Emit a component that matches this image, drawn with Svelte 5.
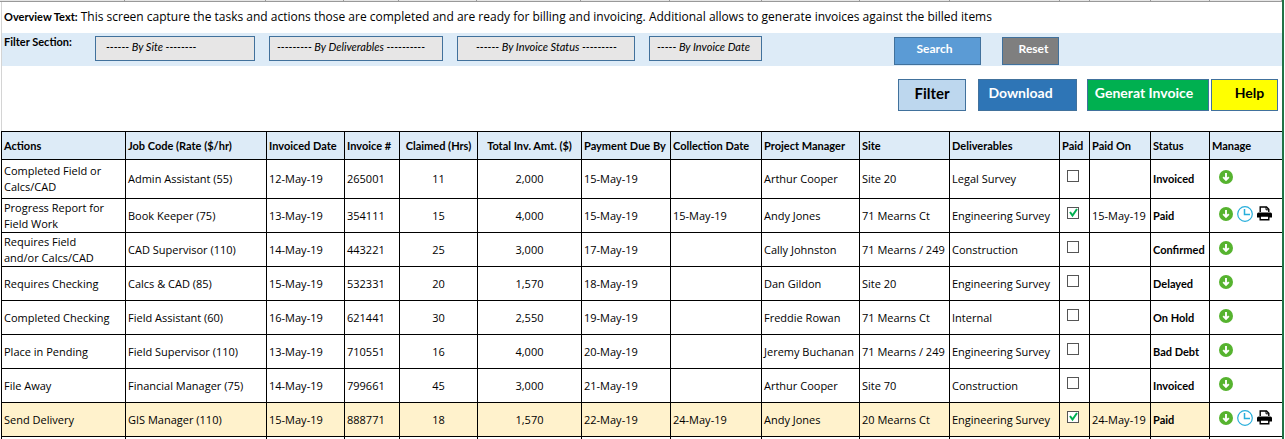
<script>
  const columns = [
    { title: 'Actions', width: 124 },
    { title: 'Job Code (Rate ($/hr)', width: 141 },
    { title: 'Invoiced Date', width: 78 },
    { title: 'Invoice #', width: 55 },
    { title: 'Claimed (Hrs)', width: 78, center: true },
    { title: 'Total Inv. Amt. ($)', width: 104, center: true },
    { title: 'Payment Due By', width: 89 },
    { title: 'Collection Date', width: 91 },
    { title: 'Project Manager', width: 98 },
    { title: 'Site', width: 90 },
    { title: 'Deliverables', width: 110 },
    { title: 'Paid', width: 30 },
    { title: 'Paid On', width: 61 },
    { title: 'Status', width: 59 },
    { title: 'Manage', width: 72 }
  ];
  const total = columns.reduce((sum, c) => sum + c.width, 0);
  const share = (c) => `width: ${(c.width / total) * 100}%`;

  const rows = [
    ['Completed Field or Calcs/CAD', 'Admin Assistant (55)', '12-May-19', '265001', '11', '2,000', '15-May-19', '', 'Arthur Cooper', 'Site 20', 'Legal Survey', '', 'Invoiced'],
    ['Progress Report for Field Work', 'Book Keeper (75)', '13-May-19', '354111', '15', '4,000', '15-May-19', '15-May-19', 'Andy Jones', '71 Mearns Ct', 'Engineering Survey', '15-May-19', 'Paid'],
    ['Requires Field and/or Calcs/CAD', 'CAD Supervisor (110)', '14-May-19', '443221', '25', '3,000', '17-May-19', '', 'Cally Johnston', '71 Mearns / 249', 'Construction', '', 'Confirmed'],
    ['Requires Checking', 'Calcs & CAD (85)', '15-May-19', '532331', '20', '1,570', '18-May-19', '', 'Dan Gildon', 'Site 20', 'Engineering Survey', '', 'Delayed'],
    ['Completed Checking', 'Field Assistant (60)', '16-May-19', '621441', '30', '2,550', '19-May-19', '', 'Freddie Rowan', '71 Mearns Ct', 'Internal', '', 'On Hold'],
    ['Place in Pending', 'Field Supervisor (110)', '13-May-19', '710551', '16', '4,000', '20-May-19', '', 'Jeremy Buchanan', '71 Mearns / 249', 'Engineering Survey', '', 'Bad Debt'],
    ['File Away', 'Financial Manager (75)', '14-May-19', '799661', '45', '3,000', '21-May-19', '', 'Arthur Cooper', 'Site 70', 'Construction', '', 'Invoiced'],
    ['Send Delivery', 'GIS Manager (110)', '15-May-19', '888771', '18', '1,570', '22-May-19', '24-May-19', 'Andy Jones', '20 Mearns Ct', 'Engineering Survey', '24-May-19', 'Paid']
  ];
</script>

<main>
  <div class="strip">
    {#each columns as c}<span style={share(c)}></span>{/each}
  </div>

  <section class="top">
    <p class="overview"><b>Overview Text:</b> This screen capture the tasks and actions those are completed and are ready for billing and invoicing. Additional allows to generate invoices against the billed items</p>

    <form class="filters" onsubmit={(e) => e.preventDefault()}>
      <span class="caption">Filter Section:</span>
      <select class="site" aria-label="Site"><option>------ By Site --------</option></select>
      <select class="deliverables" aria-label="Deliverables"><option>--------- By Deliverables ----------</option></select>
      <select class="status" aria-label="Invoice status"><option>------ By Invoice Status ---------</option></select>
      <select class="date" aria-label="Invoice date"><option>----- By Invoice Date</option></select>
      <div class="submit">
        <button class="search">Search</button>
        <button class="reset" type="reset">Reset</button>
      </div>
    </form>

    <div class="tools">
      <button class="filter">Filter</button>
      <button class="download">Download</button>
      <button class="generate">Generat Invoice</button>
      <button class="help">Help</button>
    </div>
  </section>

  <table>
    <colgroup>
      {#each columns as c}<col style={share(c)} />{/each}
    </colgroup>
    <thead>
      <tr>
        {#each columns as c}<th class:center={c.center}>{c.title}</th>{/each}
      </tr>
    </thead>
    <tbody>
      {#each rows as row, i}
        {@const paid = row[12] === 'Paid'}
        <tr class:tall={i === 0} class:selected={i === rows.length - 1}>
          {#each row.slice(0, 11) as text, n}
            <td class:wrap={n === 0} class:center={n === 4 || n === 5}>{text}</td>
          {/each}
          <td class="tick"><input type="checkbox" checked={paid} aria-label="Paid" /></td>
          <td>{row[11]}</td>
          <td class="state">{row[12]}</td>
          <td class="manage">
            <div class="icons">
              <button aria-label="Download">
                <svg width="14" height="14" viewBox="0 0 14 14">
                  <circle cx="7" cy="7" r="7" fill="#56b32f" />
                  <path d="M7 3v6.5M4.2 7.2 7 10l2.8-2.8" fill="none" stroke="#fff" stroke-width="1.9" />
                </svg>
              </button>
              {#if paid}
                <button aria-label="History">
                  <svg width="16" height="16" viewBox="0 0 16 16" fill="none" stroke="#27aedb">
                    <circle cx="8" cy="8" r="7.3" stroke-width="1.2" />
                    <path d="M7.5 3v5.5H13" stroke-width="1.5" />
                  </svg>
                </button>
                <button aria-label="Print">
                  <svg width="15" height="15" viewBox="0 0 15 15">
                    <path d="M3.2 6V1h6.3l2.3 2.3V6" fill="#fff" stroke="#000" stroke-width="1.4" />
                    <path d="M9 1v2.8h2.8" fill="none" stroke="#000" />
                    <path d="M1.5 6.5h12Q15 6.5 15 8v3.5H0V8q0-1.5 1.5-1.5z" />
                    <path d="M3.2 10h8.6v3.8H3.2z" fill="#fff" stroke="#000" stroke-width="1.4" />
                  </svg>
                </button>
              {/if}
            </div>
          </td>
        </tr>
      {/each}
      <tr class="next">{#each columns as c}<td></td>{/each}</tr>
    </tbody>
  </table>
</main>

<style>
  :global(body) { background: #fff; }
  main {
    margin-right: 1px;
    border-right: 2px solid #217346;
    font: 11px/16px "Open Sans", sans-serif;
    color: #000;
  }
  button, select { font: inherit; margin: 0; border-radius: 0; }
  b, .caption, th, .state, button, select { font-family: Lato, sans-serif; }
  .strip { display: flex; height: 1px; padding-left: 1px; background: #e6e6e6; border-bottom: 1px solid #999; }
  .strip span { box-sizing: border-box; border-right: 1px solid #999; }
  .top { margin-left: 1px; border-left: 1px solid #d4d4d4; }
  .overview { margin: 0; padding: 7px 2px 8px; font-size: 12px; white-space: nowrap; }
  .overview b { font-size: 11px; }
  .filters { display: flex; align-items: flex-start; height: 33px; padding-left: 2px; background: #ddebf7; }
  .caption { width: 91px; padding-top: 1px; font-weight: bold; }
  select {
    appearance: none;
    box-sizing: border-box;
    height: 25px;
    margin-top: 3px;
    margin-right: 14px;
    padding: 0 7px 3px;
    border: 1px solid #41719c;
    background: #e7e6e6;
    color: #000;
    font-style: italic;
  }
  .site { width: 160px; padding-left: 10px; }
  .deliverables { width: 174px; }
  .status { width: 178px; padding-left: 18px; }
  .date { width: 113px; }
  .submit { display: flex; gap: 21px; margin: 4px 223px 0 auto; }
  .submit button, .tools button { border: 1px solid #41719c; font-weight: bold; color: #fff; }
  .submit button { height: 28px; padding: 0 0 4px; font-size: 12px; }
  .submit .search { width: 87px; padding-right: 6px; background: #5b9bd5; }
  .submit .reset { width: 57px; padding-left: 6px; background: #7f7f7f; }
  .tools { display: flex; justify-content: flex-end; align-items: flex-start; padding: 13px 4px 20px; }
  .tools button { height: 32px; padding: 0 0 4px; font-size: 14px; }
  .tools .filter { width: 68px; margin-right: 12px; background: #bdd7ee; color: #000; font-size: 15px; }
  .tools .download { width: 99px; margin-right: 10px; padding-right: 14px; background: #2e75b6; }
  .tools .generate { width: 122px; margin-right: 2px; padding-right: 8px; background: #00b050; }
  .tools .help { width: 67px; padding-left: 10px; background: #ff0; color: #000; }
  table { width: calc(100% - 1px); margin-left: 1px; table-layout: fixed; border-collapse: separate; border-spacing: 0; border-left: 1px solid #000; border-top: 1px solid #000; }
  th, td { box-sizing: border-box; padding: 0 2px; border-right: 1px solid #000; border-bottom: 1px solid #000; text-align: left; white-space: nowrap; }
  th:last-child, td:last-child { border-right: 0; }
  th { height: 28px; background: #ddebf7; }
  td { height: 34px; }
  .tall td { height: 39px; }
  .next td { height: 2px; border-bottom: 0; }
  td.wrap { padding-right: 12px; white-space: normal; }
  th.center, td.center { text-align: center; }
  .state { font-weight: bold; }
  .selected td { background: #fff2cc; }
  .selected td.manage { background: #fff; }
  .tick { padding: 0 7px 6px; line-height: 0; }
  input {
    appearance: none;
    box-sizing: border-box;
    width: 12px;
    height: 12px;
    margin: 0;
    border: 1px solid #555;
    background: #fff;
  }
  input:checked { background: #fff url("data:image/svg+xml,%3Csvg xmlns='http://www.w3.org/2000/svg' viewBox='0 0 10 10'%3E%3Cpath d='M2 4 4.5 7.5 9 1' fill='none' stroke='%2300b050' stroke-width='2'/%3E%3C/svg%3E"); }
  .manage { padding: 0 0 4px 9px; }
  .icons { display: flex; align-items: center; gap: 4px; }
  .icons button { display: flex; padding: 0; border: 0; background: none; }
</style>
